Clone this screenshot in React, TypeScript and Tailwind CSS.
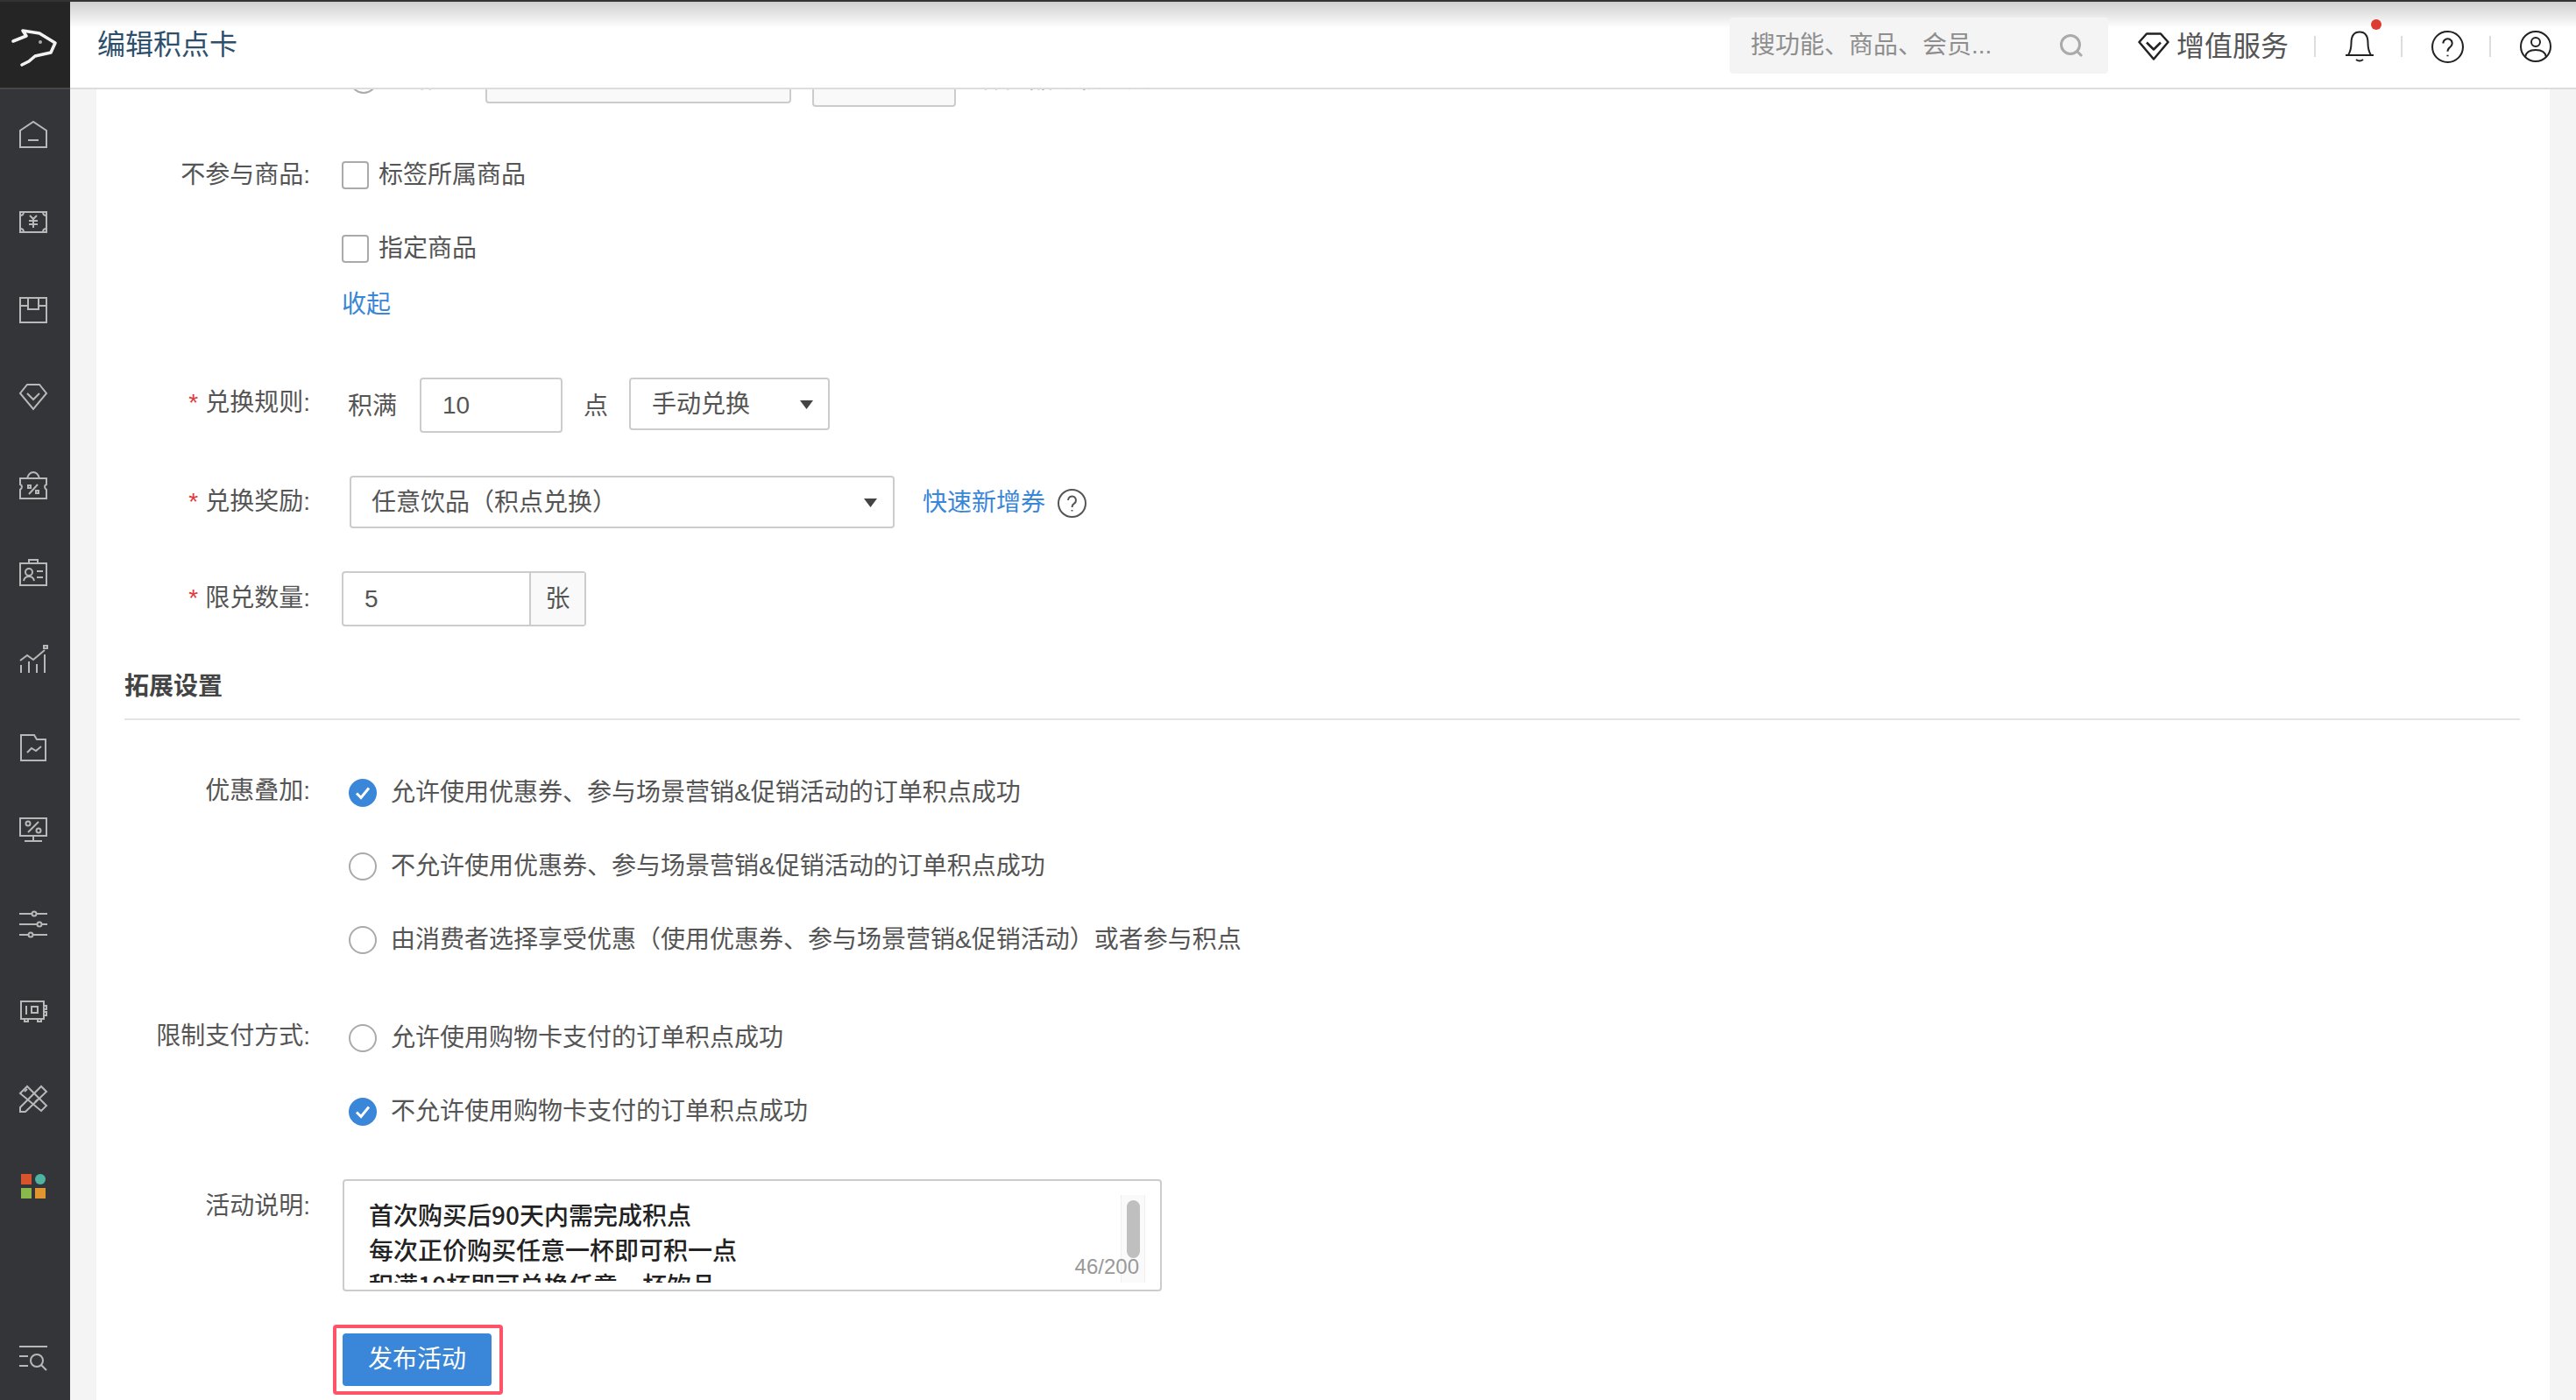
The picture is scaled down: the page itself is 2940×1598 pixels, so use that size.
import type { ReactNode } from "react";

const NAV_ICONS: { dy: number; icon: ReactNode }[] = [
  {
    dy: 2,
    icon: (
      <>
        <path d="M1 30V11L16 1l15 10v19z" />
        <path d="M10 22h12" />
      </>
    ),
  },
  {
    dy: 5,
    icon: (
      <>
        <path d="M1 1h30v23H1z" />
        <path d="M5 1q0 4-4 4M27 1q0 4 4 4M5 24q0-4-4-4M27 24q0-4 4-4" />
        <path d="M12 5l4 4 4-4M16 9v10M11 11h10M11 15h10" />
      </>
    ),
  },
  {
    dy: 3,
    icon: (
      <>
        <path d="M1 1h30v28H1z" />
        <path d="M1 10h9M22 10h9M10 1v13h12V1" />
      </>
    ),
  },
  {
    dy: 2,
    icon: (
      <>
        <path d="M9 1h14l8 10-15 18L1 11z" />
        <path d="M9 11l7 7 7-7" />
      </>
    ),
  },
  {
    dy: 2,
    icon: (
      <>
        <path d="M1 8h30v7q-4 2 0 6v10H1V21q4-4 0-6z" />
        <path d="M9 8q2-7 7-7t7 7" />
        <path d="M11 26l10-11M10 16h3v3h-3zM19 22h3v3h-3z" />
      </>
    ),
  },
  {
    dy: 2,
    icon: (
      <>
        <path d="M1 5h30v25H1z" />
        <path d="M11 5V1h10v4" />
        <circle cx="11" cy="15" r="4" />
        <path d="M5 25q1-5 6-5t6 5M20 14h7M20 21h7" />
      </>
    ),
  },
  {
    dy: 1,
    icon: (
      <>
        <path d="M1 17l8-6 7 5L29 5" />
        <path d="M2 22v9M11 18v13M20 21v10M29 10v21" />
        <path d="M28 0h4v3h-4z" />
      </>
    ),
  },
  {
    dy: 2,
    icon: (
      <>
        <path d="M2 1h15l3 5h10v24H2z" />
        <path d="M9 21l5-5 5 3 6-5" />
      </>
    ),
  },
  {
    dy: -3,
    icon: (
      <>
        <path d="M1 1h30v20H1z" />
        <path d="M16 21v5M6 27h20" />
        <path d="M10 17L22 5" />
        <circle cx="10" cy="7" r="2.5" />
        <circle cx="22" cy="15" r="2.5" />
      </>
    ),
  },
  {
    dy: 0,
    icon: (
      <>
        <path d="M0 7h14M20 7h12M0 19h20M26 19h6M0 31h10M16 31h16" />
        <circle cx="17" cy="7" r="2.5" />
        <circle cx="23" cy="19" r="2.5" />
        <circle cx="13" cy="31" r="2.5" />
      </>
    ),
  },
  {
    dy: 6,
    icon: (
      <>
        <path d="M2 1h26v20H2z" />
        <path d="M6 21v3h4v-3M21 21v3h4v-3M28 6h3v4h-3M28 13h3v4h-3" />
        <path d="M8 6v10M14 7h7v7h-7z" />
      </>
    ),
  },
  {
    dy: 2,
    icon: (
      <>
        <path d="M1 10l8-8 22 22-6 6z" />
        <path d="M31 8l-6-6L1 26v5h6z" />
        <path d="M6 8l3-3M18 20l3-3" />
      </>
    ),
  },
];

function ColorGrid() {
  return (
    <div className="mt-[4px] grid w-[28px] grid-cols-2 gap-[4px]">
      <span className="h-[12px] bg-[#d9542c]" />
      <span className="h-[12px] rounded-full bg-[#4fb3a4]" />
      <span className="h-[12px] bg-[#8bb84a]" />
      <span className="h-[12px] bg-[#e09530]" />
    </div>
  );
}

function Sidebar() {
  return (
    <aside className="flex h-full w-[80px] shrink-0 flex-col bg-[#333538] text-[#b8b8b8]">
      <div className="flex h-[100px] items-center justify-center border-b-2 border-[#45474a] bg-[#252525]">
        <svg width="80" height="98" viewBox="0 0 80 98" fill="none">
          <path
            d="M15 45l15-6-4-6 19 3 18 11-5 11-18 4-7 6-8 4"
            stroke="#f2f2f2"
            strokeWidth="3.600"
            strokeLinejoin="round"
            strokeLinecap="round"
          />
          <circle cx="46" cy="46" r="2" fill="#aaa" />
        </svg>
      </div>
      {NAV_ICONS.map(({ dy, icon }, i) => (
        <div key={i} className="flex h-[100px] items-center justify-center pr-[4px]">
          <svg
            className="overflow-visible"
            width="32"
            height="32"
            viewBox="0 0 32 32"
            fill="none"
            stroke="currentColor"
            strokeWidth="2"
          >
            <g transform={`translate(0 ${dy})`}>{icon}</g>
          </svg>
        </div>
      ))}
      <div className="flex h-[100px] items-center justify-center pr-[4px]">
        <ColorGrid />
      </div>
      <div className="mt-auto flex h-[96px] items-center justify-center pr-[4px]">
        <svg width="32" height="30" viewBox="0 0 32 30" fill="none" stroke="currentColor" strokeWidth="2">
          <path d="M0 2h32M0 13h10M0 24h10" />
          <circle cx="20" cy="18" r="7" />
          <path d="M25 23l6 6" />
        </svg>
      </div>
    </aside>
  );
}

function Divider() {
  return <span className="h-[24px] w-[2px] bg-[#ddd]" />;
}

function Header() {
  return (
    <header className="flex h-[100px] shrink-0 items-center border-b-2 border-[#ddd] bg-[linear-gradient(#cfcfcf_0,#fff_30px)] pt-[4px] pr-[28px] pl-[31px]">
      <h1 className="-mt-[4px] text-[32px] leading-none font-normal text-[#2c4f6e]">编辑积点卡</h1>
      <div className="-mt-[2px] ml-auto flex h-[64px] w-[432px] items-center justify-between rounded-[4px] bg-[#f4f4f4] pr-[28px] pl-[24px] text-[28px] text-[#8e8e8e]">
        <span>搜功能、商品、会员...</span>
        <svg width="28" height="28" viewBox="0 0 28 28" fill="none" stroke="#aaa" strokeWidth="3">
          <circle cx="13" cy="13" r="10.5" />
          <path d="M21 21l5 5" />
        </svg>
      </div>
      <svg className="ml-[34px]" width="36" height="32" viewBox="0 0 36 32" fill="none" stroke="#222" strokeWidth="2.500" strokeLinejoin="round">
        <path d="M10 1.500h16l8.500 9.500L18 30.500 1.500 11z" />
        <path d="M10 11.500l8 8 8-8" />
      </svg>
      <span className="mr-[29px] ml-[8px] text-[32px] leading-none text-[#555]">增值服务</span>
      <Divider />
      <div className="relative mr-[30px] ml-[33px] h-[36px] w-[34px]">
        <svg width="34" height="36" viewBox="0 0 34 36" fill="none" stroke="#222" strokeWidth="2">
          <path d="M1 28h32M4 28c3-5 3.500-9 3.500-14C7.500 6 11 1.500 17 1.500S26.500 6 26.500 14c0 5 .5 9 3.500 14" />
          <path d="M13 33q4 3 8 0" />
        </svg>
        <span className="absolute top-[-13px] right-[-8px] h-[12px] w-[12px] rounded-full bg-[#dd3a32]" />
      </div>
      <Divider />
      <svg className="mr-[29px] ml-[33px]" width="37" height="37" viewBox="0 0 36 36" fill="none" stroke="#222" strokeWidth="2">
        <circle cx="18" cy="18" r="17" />
        <path d="M13 14a5 5 0 1 1 8 4c-2 1.500-3 2.500-3 5" />
        <path d="M18 27v1.500" />
      </svg>
      <Divider />
      <svg className="ml-[33px]" width="36" height="36" viewBox="0 0 36 36" fill="none" stroke="#222" strokeWidth="2">
        <circle cx="18" cy="18" r="17" />
        <circle cx="18" cy="13" r="5" />
        <path d="M6 30c1-6 6-8 12-8s11 2 12 8" />
      </svg>
    </header>
  );
}

function FormRow({
  label,
  required,
  labelClass = "",
  className = "",
  children,
}: {
  label?: string;
  required?: boolean;
  labelClass?: string;
  className?: string;
  children: ReactNode;
}) {
  return (
    <div className={`flex ${className}`}>
      <div className={`w-[212px] shrink-0 text-right text-[28px] leading-[40px] text-[#555] ${labelClass}`}>
        {required && <span className="mr-[8px] text-[#e03c3c]">*</span>}
        {label}
      </div>
      <div className="ml-[36px] min-w-0 flex-1">{children}</div>
    </div>
  );
}

function Checkbox({ label }: { label: string }) {
  return (
    <div className="flex h-[60px] items-center">
      <span className="h-[32px] w-[31px] rounded-[4px] border-2 border-[#aaa]" />
      <span className="ml-[11px] text-[28px] text-[#555]">{label}</span>
    </div>
  );
}

function Radio({ label, checked }: { label: string; checked?: boolean }) {
  return (
    <div className="flex h-[60px] items-center pl-[8px]">
      {checked ? (
        <svg width="32" height="32" viewBox="0 0 32 32">
          <circle cx="16" cy="16" r="16" fill="#3a86d8" />
          <path d="M9 16.500l5 5 9-11" fill="none" stroke="#fff" strokeWidth="3" />
        </svg>
      ) : (
        <span className="h-[32px] w-[32px] rounded-full border-2 border-[#aaa]" />
      )}
      <span className="ml-[16px] text-[28px] text-[#555]">{label}</span>
    </div>
  );
}

function Caret() {
  return (
    <svg width="15" height="10" viewBox="0 0 15 10">
      <path d="M0 0h15L7.500 10z" fill="#444" />
    </svg>
  );
}

function HelpIcon() {
  return (
    <svg width="33" height="33" viewBox="0 0 33 33" fill="none" stroke="#555" strokeWidth="2">
      <circle cx="16.500" cy="16.500" r="15.500" />
      <path d="M12 13a4.500 4.500 0 1 1 7 3.700c-2 1.300-2.500 2.300-2.500 4.300" />
      <path d="M16.500 24v1.500" />
    </svg>
  );
}

function Form() {
  return (
    <div>
      <div className="flex h-[62px] items-start pl-[257px] text-[28px] text-[#555]">
        <span className="mt-[15px] h-[32px] w-[32px] rounded-full border-2 border-[#aaa]" />
        <span className="mt-[10px] ml-[16px] w-[107px]">按标签</span>
        <div className="h-[58px] w-[349px] rounded-[4px] border-2 border-[#ccc] bg-[#f9f9f9] pt-[6px] pl-[28px] text-[#aaa]">
          请选择商品标签
        </div>
        <div className="ml-[24px] h-[62px] w-[164px] rounded-[4px] border-2 border-[#ccc] bg-[#f9f9f9]" />
        <span className="mt-[10px] ml-[27px]">杯商品可积一点</span>
      </div>

      <FormRow label="不参与商品:" className="mt-[48px]" labelClass="mt-[10px]">
        <Checkbox label="标签所属商品" />
        <div className="mt-[24px]">
          <Checkbox label="指定商品" />
        </div>
        <div className="mt-[14px] text-[28px] leading-[40px] text-[#3a86d8]">收起</div>
      </FormRow>

      <FormRow label="兑换规则:" required className="mt-[63px]" labelClass="mt-[9px]">
        <div className="flex items-start pl-[7px] text-[28px] text-[#555]">
          <span className="mt-[12px]">积满</span>
          <div className="ml-[26px] flex h-[63px] w-[163px] items-center rounded-[4px] border-2 border-[#ccc] pl-[24px]">10</div>
          <span className="mt-[12px] ml-[24px]">点</span>
          <div className="ml-[24px] flex h-[60px] w-[229px] items-center justify-between rounded-[4px] border-2 border-[#ccc] pt-[2px] pr-[17px] pl-[24px]">
            手动兑换
            <Caret />
          </div>
        </div>
      </FormRow>

      <FormRow label="兑换奖励:" required className="mt-[49px]" labelClass="mt-[10px]">
        <div className="flex items-center pl-[9px] text-[28px] text-[#555]">
          <div className="flex h-[60px] w-[622px] items-center justify-between rounded-[4px] border-2 border-[#ccc] pt-[2px] pr-[18px] pl-[23px]">
            任意饮品（积点兑换）
            <Caret />
          </div>
          <span className="mt-[2px] ml-[32px] text-[#3a86d8]">快速新增券</span>
          <span className="mt-[2px] ml-[14px] flex">
            <HelpIcon />
          </span>
        </div>
      </FormRow>

      <FormRow label="限兑数量:" required className="mt-[49px]" labelClass="mt-[11px]">
        <div className="flex h-[63px] w-[279px] rounded-[4px] border-2 border-[#ccc] text-[28px] text-[#555]">
          <div className="flex w-[212px] items-center pl-[24px]">5</div>
          <div className="flex flex-1 items-center justify-center border-l-2 border-[#ccc] bg-[#f9f9f9]">张</div>
        </div>
      </FormRow>

      <div className="mt-[49px] h-[58px] border-b-2 border-[#e4e4e4] text-[28px] leading-[40px] font-bold text-[#444]">
        拓展设置
      </div>

      <FormRow label="优惠叠加:" className="mt-[53px]" labelClass="mt-[8px]">
        <div className="flex flex-col gap-[24px]">
          <Radio checked label="允许使用优惠券、参与场景营销&促销活动的订单积点成功" />
          <Radio label="不允许使用优惠券、参与场景营销&促销活动的订单积点成功" />
          <Radio label="由消费者选择享受优惠（使用优惠券、参与场景营销&促销活动）或者参与积点" />
        </div>
      </FormRow>

      <FormRow label="限制支付方式:" className="mt-[52px]" labelClass="mt-[8px]">
        <div className="flex flex-col gap-[24px]">
          <Radio label="允许使用购物卡支付的订单积点成功" />
          <Radio checked label="不允许使用购物卡支付的订单积点成功" />
        </div>
      </FormRow>

      <FormRow label="活动说明:" className="mt-[47px]" labelClass="mt-[11px]">
        <div className="relative ml-px flex h-[128px] w-[935px] rounded-[4px] border-2 border-[#ccc] pt-[16px] pr-[17px] pb-[8px] pl-[28px]">
          <div className="h-[100px] flex-1 overflow-hidden pt-[2px] font-['Noto_Sans_CJK_SC',sans-serif] text-[28px] leading-[40px] font-medium text-[#222]">
            <div>首次购买后90天内需完成积点</div>
            <div>每次正价购买任意一杯即可积一点</div>
            <div>积满10杯即可兑换任意一杯饮品</div>
          </div>
          <div className="h-[100px] w-[28px] border-x border-[#eee] bg-[#fafafa] pt-[6px] pl-[6px]">
            <div className="h-[66px] w-[15px] rounded-full bg-[#bfbfbf]" />
          </div>
          <span className="absolute right-[24px] bottom-[8px] text-[24px] leading-[36px] text-[#999]">46/200</span>
        </div>
      </FormRow>

      <div className="mt-[38px] ml-[238px] w-fit rounded-[4px] border-4 border-[#ff5468] py-[6px] pr-[9px] pl-[7px]">
        <button className="flex h-[60px] w-[170px] items-center justify-center rounded-[4px] bg-[#3a86d8] text-[28px] text-white">
          发布活动
        </button>
      </div>
    </div>
  );
}

export default function App() {
  return (
    <div className="flex h-screen flex-col overflow-hidden font-['Liberation_Sans','Noto_Sans_CJK_SC',sans-serif]">
      <div className="h-[2px] shrink-0 bg-[#333]" />
      <div className="flex min-h-0 flex-1">
        <Sidebar />
        <div className="flex min-w-0 flex-1 flex-col">
          <Header />
          {/* page is scrolled: the first form row sits partly under the header */}
          <main className="min-h-0 flex-1 overflow-hidden bg-[#f4f4f4] px-[30px]">
            <div className="-mt-[42px] h-[calc(100%+42px)] bg-white pr-[34px] pl-[32px]">
              <Form />
            </div>
          </main>
        </div>
      </div>
    </div>
  );
}
